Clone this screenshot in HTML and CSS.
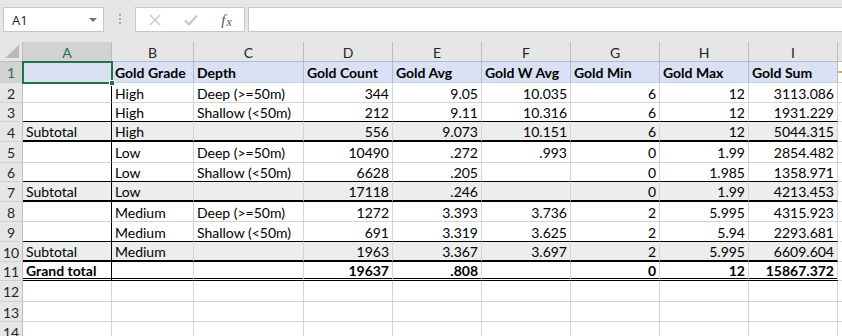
FILE: index.html
```html
<!DOCTYPE html>
<html>
<head>
<meta charset="utf-8">
<link rel="stylesheet" href="styles.css">
</head>
<body>
<div class="app">
  <div class="fbar">
    <div class="namebox"><span class="nb-text">A1</span><span class="nb-arrow"></span></div>
    <div class="grip"><i></i><i></i><i></i></div>
    <div class="fbtns">
      <span class="fb"><svg width="12" height="12" viewBox="0 0 12 12"><path d="M1 1 L11 11 M11 1 L1 11" stroke="#c4c4c4" stroke-width="1.3" fill="none"/></svg></span>
      <span class="fb"><svg width="14" height="12" viewBox="0 0 14 12"><path d="M1 6.5 L5 10.5 L13 1.5" stroke="#c4c4c4" stroke-width="2" fill="none"/></svg></span>
      <span class="fb fx"><i>f</i><i class="fx-x">x</i></span>
    </div>
    <div class="finput"></div>
  </div>

  <div class="sheet">
    <div class="row colhead">
      <div class="corner"><svg width="16" height="14" viewBox="0 0 16 14"><path d="M15 0 L15 13 L1 13 Z" fill="#b9b9b9"/></svg></div>
      <div class="ch sel">A</div><div class="ch">B</div><div class="ch">C</div><div class="ch">D</div><div class="ch">E</div><div class="ch">F</div><div class="ch">G</div><div class="ch">H</div><div class="ch">I</div><div class="ch j"></div>
    </div>

    <div class="row hdr">
      <div class="rh sel">1</div>
      <div class="c"></div><div class="c">Gold Grade</div><div class="c">Depth</div><div class="c">Gold Count</div><div class="c">Gold Avg</div><div class="c">Gold W Avg</div><div class="c">Gold Min</div><div class="c">Gold Max</div><div class="c">Gold Sum</div><div class="c j"><span class="mark"></span></div>
    </div>

    <div class="row data">
      <div class="rh">2</div>
      <div class="c"></div><div class="c">High</div><div class="c">Deep (&gt;=50m)</div><div class="c n">344</div><div class="c n">9.05</div><div class="c n">10.035</div><div class="c n">6</div><div class="c n">12</div><div class="c n">3113.086</div><div class="c j"></div>
    </div>

    <div class="row data pre">
      <div class="rh">3</div>
      <div class="c"></div><div class="c">High</div><div class="c">Shallow (&lt;50m)</div><div class="c n">212</div><div class="c n">9.11</div><div class="c n">10.316</div><div class="c n">6</div><div class="c n">12</div><div class="c n">1931.229</div><div class="c j"></div>
    </div>

    <div class="row data sub">
      <div class="rh">4</div>
      <div class="c">Subtotal</div><div class="c">High</div><div class="c"></div><div class="c n">556</div><div class="c n">9.073</div><div class="c n">10.151</div><div class="c n">6</div><div class="c n">12</div><div class="c n">5044.315</div><div class="c j"></div>
    </div>

    <div class="row data">
      <div class="rh">5</div>
      <div class="c"></div><div class="c">Low</div><div class="c">Deep (&gt;=50m)</div><div class="c n">10490</div><div class="c n">.272</div><div class="c n">.993</div><div class="c n">0</div><div class="c n">1.99</div><div class="c n">2854.482</div><div class="c j"></div>
    </div>

    <div class="row data pre">
      <div class="rh">6</div>
      <div class="c"></div><div class="c">Low</div><div class="c">Shallow (&lt;50m)</div><div class="c n">6628</div><div class="c n">.205</div><div class="c n"></div><div class="c n">0</div><div class="c n">1.985</div><div class="c n">1358.971</div><div class="c j"></div>
    </div>

    <div class="row data sub">
      <div class="rh">7</div>
      <div class="c">Subtotal</div><div class="c">Low</div><div class="c"></div><div class="c n">17118</div><div class="c n">.246</div><div class="c n"></div><div class="c n">0</div><div class="c n">1.99</div><div class="c n">4213.453</div><div class="c j"></div>
    </div>

    <div class="row data">
      <div class="rh">8</div>
      <div class="c"></div><div class="c">Medium</div><div class="c">Deep (&gt;=50m)</div><div class="c n">1272</div><div class="c n">3.393</div><div class="c n">3.736</div><div class="c n">2</div><div class="c n">5.995</div><div class="c n">4315.923</div><div class="c j"></div>
    </div>

    <div class="row data pre">
      <div class="rh">9</div>
      <div class="c"></div><div class="c">Medium</div><div class="c">Shallow (&lt;50m)</div><div class="c n">691</div><div class="c n">3.319</div><div class="c n">3.625</div><div class="c n">2</div><div class="c n">5.94</div><div class="c n">2293.681</div><div class="c j"></div>
    </div>

    <div class="row data sub">
      <div class="rh">10</div>
      <div class="c">Subtotal</div><div class="c">Medium</div><div class="c"></div><div class="c n">1963</div><div class="c n">3.367</div><div class="c n">3.697</div><div class="c n">2</div><div class="c n">5.995</div><div class="c n">6609.604</div><div class="c j"></div>
    </div>

    <div class="row data tot">
      <div class="rh">11</div>
      <div class="c">Grand total</div><div class="c"></div><div class="c"></div><div class="c n">19637</div><div class="c n">.808</div><div class="c n"></div><div class="c n">0</div><div class="c n">12</div><div class="c n">15867.372</div><div class="c j"></div>
    </div>

    <div class="row">
      <div class="rh">12</div>
      <div class="c"></div><div class="c"></div><div class="c"></div><div class="c"></div><div class="c"></div><div class="c"></div><div class="c"></div><div class="c"></div><div class="c"></div><div class="c j"></div>
    </div>
    <div class="row">
      <div class="rh">13</div>
      <div class="c"></div><div class="c"></div><div class="c"></div><div class="c"></div><div class="c"></div><div class="c"></div><div class="c"></div><div class="c"></div><div class="c"></div><div class="c j"></div>
    </div>
    <div class="row">
      <div class="rh">14</div>
      <div class="c"></div><div class="c"></div><div class="c"></div><div class="c"></div><div class="c"></div><div class="c"></div><div class="c"></div><div class="c"></div><div class="c"></div><div class="c j"></div>
    </div>

    <div class="selbox"></div>
    <div class="handle"></div>
  </div>
</div>
</body>
</html>
```

FILE: styles.css
```css
html, body {
  margin: 0;
  padding: 0;
  width: 842px;
  height: 336px;
  overflow: hidden;
  background: #ffffff;
}

.app {
  width: 842px;
  height: 336px;
  overflow: hidden;
}

/* ---------- formula bar ---------- */
.fbar {
  height: 42px;
  box-sizing: border-box;
  padding: 7px 0 0 3px;
  background: #e6e6e6;
  display: flex;
  align-items: flex-start;
}

.namebox {
  width: 101px;
  height: 25px;
  box-sizing: border-box;
  border: 1px solid #c6c6c6;
  background: #fff;
  display: flex;
  align-items: center;
  justify-content: space-between;
  padding: 0 6px 0 8px;
  font-family: "Open Sans", "Noto Sans", sans-serif;
  font-size: 13px;
  color: #222;
}

.nb-arrow {
  width: 0;
  height: 0;
  border-left: 4px solid transparent;
  border-right: 4px solid transparent;
  border-top: 4px solid #707070;
}

.grip {
  width: 31px;
  display: flex;
  flex-direction: column;
  align-items: center;
  gap: 2px;
  padding-top: 7px;
}
.grip i {
  display: block;
  width: 2px;
  height: 2px;
  background: #a8a8a8;
}

.fbtns {
  width: 110px;
  height: 25px;
  box-sizing: border-box;
  border: 1px solid #c6c6c6;
  background: #fff;
  display: grid;
  grid-template-columns: 37px 36px 35px;
  align-items: center;
  justify-items: center;
}
.fb {
  display: flex;
  align-items: center;
  justify-content: center;
  height: 23px;
}
.fx {
  font-family: "Liberation Serif", serif;
  color: #555;
  font-size: 15px;
  padding-top: 1px;
}
.fx i { font-style: italic; }
.fx .fx-x { font-size: 12px; margin-left: 1px; margin-top: 3px; }

.finput {
  flex: 1;
  margin-left: 3px;
  height: 25px;
  box-sizing: border-box;
  border: 1px solid #c6c6c6;
  border-right: none;
  background: #fff;
}

/* ---------- sheet grid ---------- */
.sheet {
  position: relative;
  display: grid;
  grid-template-columns: 23px 89px 82px 110px 89px 89px 89px 89px 89px 89px 4px;
  grid-template-rows: 20px 21px 20px 19px 20px 21px 19px 20px 20px 20px 20px 19px 21px 20px 20px;
  font-family: Lato, "Liberation Sans", sans-serif;
  font-size: 14px;
  color: #000;
}

.row { display: contents; }

.corner {
  background: #e6e6e6;
  border-right: 1px solid #bdbdbd;
  border-bottom: 1px solid #bdbdbd;
  box-sizing: border-box;
  display: flex;
  align-items: flex-end;
  justify-content: flex-end;
  padding: 0 2px 2px 0;
}

.ch {
  background: #e6e6e6;
  border-right: 1px solid #bcbcbc;
  border-bottom: 1px solid #a9bcd9;
  box-sizing: border-box;
  display: flex;
  align-items: center;
  justify-content: center;
  color: #262626;
  padding-top: 1px;
}
.ch.sel {
  background: #d2d2d2;
  color: #217346;
}
.ch.j { border-bottom-color: #bdbdbd; border-right: none; }

.rh {
  background: #e6e6e6;
  border-right: 1px solid #bdbdbd;
  border-bottom: 1px solid #d0d0d0;
  box-sizing: border-box;
  display: flex;
  align-items: center;
  justify-content: center;
  color: #262626;
  padding-top: 1px;
}
.rh.sel {
  background: #d2d2d2;
  color: #217346;
}

.c {
  box-sizing: border-box;
  border-right: 1px solid #d4d4d4;
  border-bottom: 1px solid #d4d4d4;
  display: flex;
  align-items: center;
  padding: 1px 3px 0 3px;
  white-space: nowrap;
  overflow: hidden;
}
.c.n { justify-content: flex-end; }
.c.j { border-right: none; padding: 0; }

/* header row 1 */
.hdr > .c {
  background: #d9e1f2;
  border-right-color: #a9bde3;
  border-bottom-color: #c3cfe6;
  font-weight: bold;
}
.hdr > .c.j {
  background: #fff;
  border-bottom-color: #d4d4d4;
}
.mark {
  display: block;
  width: 4px;
  height: 2px;
  background: #e3a35c;
}

/* black vertical between A and B */
.data > .c:nth-child(2) { border-right-color: #000; }

/* thin black line above subtotal */
.pre > .c:not(.j) { border-bottom-color: #000; }

/* subtotal rows */
.sub > .c:not(.j) {
  background: #ededed;
  border-bottom: 2px solid #000;
}

/* grand total */
.tot > .c:not(.j) {
  font-weight: bold;
  border-bottom: 3px double #000;
}

/* selection overlay */
.selbox {
  position: absolute;
  left: 22px;
  top: 19px;
  width: 91px;
  height: 23px;
  box-sizing: border-box;
  border: 2px solid #217346;
}
.handle {
  position: absolute;
  left: 109px;
  top: 38px;
  width: 6px;
  height: 6px;
  box-sizing: border-box;
  background: #217346;
  border: 1px solid #fff;
}
```
